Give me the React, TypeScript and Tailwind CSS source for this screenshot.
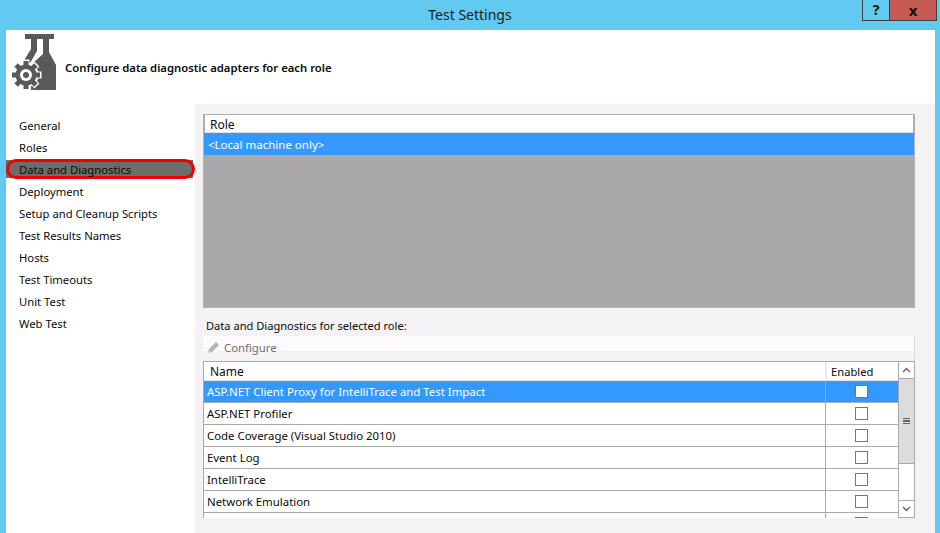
const font = { fontFamily: '"Noto Sans", sans-serif' };

const nav = ["General", "Roles", "Data and Diagnostics", "Deployment", "Setup and Cleanup Scripts", "Test Results Names", "Hosts", "Test Timeouts", "Unit Test", "Web Test"];
const rows = ["ASP.NET Client Proxy for IntelliTrace and Test Impact", "ASP.NET Profiler", "Code Coverage (Visual Studio 2010)", "Event Log", "IntelliTrace", "Network Emulation"];
const angles = [0, 45, 90, 135, 180, 225, 270, 315];

function Flask() {
  return (
    <svg width="46" height="57" viewBox="0 0 46 57" className="block shrink-0">
      <path fill="#595959" d="M14 0H43V5H38V18L45 31V56H20V40L22 29L32 20V5H26V17L18 31L12 28L20 15V5H14Z" />
      <g transform="translate(15 41)">
        <circle r="11" fill="#fff" stroke="#fff" strokeWidth="3" />
        {angles.map((a) => (
          <rect key={"h" + a} x="-3.500" y="-15.500" width="7" height="7" fill="#fff" transform={`rotate(${a})`} />
        ))}
        {angles.map((a) => (
          <rect key={a} x="-2.500" y="-14" width="5" height="6" fill="#595959" transform={`rotate(${a})`} />
        ))}
        <circle r="10.500" fill="#595959" />
        <circle r="6" fill="#fff" />
        <circle r="3" fill="#595959" />
      </g>
    </svg>
  );
}

function Check() {
  return <div className="w-[13px] h-[13px] border border-[#767676] bg-white" />;
}

export default function App() {
  return (
    <div className="w-[940px] h-[533px] overflow-hidden bg-[#62c9f0] flex flex-col text-[11.500px] leading-[16px] text-[#0a0a0a]" style={font}>
      <div className="h-[30px] shrink-0 relative flex items-center justify-center border-b border-[#8fb6c6]">
        <span className="text-[14px] text-[#1c1c1c]">Test Settings</span>
        <div className="absolute top-0 left-[862px] flex h-[21px] border-x border-b border-[#3d3d3d] font-bold text-[#111]">
          <div className="w-[27px] flex items-center justify-center border-r border-[#3d3d3d] text-[14px]">?</div>
          <div className="w-[46px] bg-[#c75a52] flex items-center justify-center text-[15px]">x</div>
        </div>
      </div>
      <div className="flex-1 ml-[6px] mr-[5px] bg-white flex flex-col min-h-0">
        <div className="h-[74px] shrink-0 flex items-start pl-[5px] pt-[4px]">
          <Flask />
          <div className="ml-[8px] mt-[26px] font-semibold text-[11.300px]">Configure data diagnostic adapters for each role</div>
        </div>
        <div className="flex-1 flex min-h-0">
          <div className="w-[189px] shrink-0 pt-[11px]">
            {nav.map((n, i) => (
              <div key={n} className={i === 2 ? "relative h-[22px] pl-[13px] flex items-center" : "h-[22px] pl-[13px] flex items-center"}>
                {i === 2 && <div className="absolute left-0 top-[1px] w-[187px] h-[18px] bg-[#6c6e69]" />}
                {i === 2 && <div className="absolute left-0 top-0 w-[189px] h-[20px] border-[3px] border-[#f00000] rounded-[10px]" />}
                <span className="relative text-[11.250px]">{n}</span>
              </div>
            ))}
          </div>
          <div className="flex-1 bg-[#f5f2f5] pl-[8px] pr-[20px] pt-[10px] flex flex-col min-h-0">
            <div className="h-[194px] shrink-0 bg-[#aaa8aa] border border-[#b4afb4] flex flex-col">
              <div className="h-[18px] mx-[1px] bg-white pl-[5px] pt-[2px] flex items-center border-b border-[#e0e0e0] text-[12px]">Role</div>
              <div className="h-[22px] bg-[#3399ff] text-white pl-[4px] pt-[1px] flex items-center">&lt;Local machine only&gt;</div>
            </div>
            <div className="h-[28px] shrink-0 pl-[3px] pt-[8px] flex items-center text-[11.100px]">Data and Diagnostics for selected role:</div>
            <div className="h-[25px] shrink-0 bg-gradient-to-b from-[#fdfafd] from-60% to-[#f5f2f5] to-60% pl-[4px] pb-[2px] flex items-center gap-[4px] text-[#6d6d6d] border-r border-[#d8d8d8]">
              <svg width="13" height="13" viewBox="0 0 13 13"><path fill="#b5b5b5" d="M9 1l3 3-7 7-4 1 1-4zM1 12h3L1 9z" /></svg>
              <span className="text-[11.300px]">Configure</span>
            </div>
            <div className="h-[157px] shrink-0 flex border-t border-[#aaa8aa] overflow-hidden">
              <div className="flex-1 border-l border-[#aaa8aa] min-w-0">
                <div className="h-[19px] flex bg-white border-b border-[#e4e4e4]">
                  <div className="flex-1 pl-[6px] pt-[2px] flex items-center text-[12px]">Name</div>
                  <div className="w-[73px] flex items-center pl-[4px] pt-[2px] border-l-2 border-[#e8e8e8] text-[11.200px]">Enabled</div>
                </div>
                {rows.map((r, i) => (
                  <div key={r} className={i === 0 ? "h-[22px] flex bg-[#3399ff] text-white border-b border-[#aaa8aa]" : "h-[22px] flex bg-white border-b border-[#aaa8aa]"}>
                    <div className="flex-1 pl-[3px] flex items-center text-[11.400px]">{r}</div>
                    <div className="w-[73px] flex items-center justify-center pr-[2px] border-l border-[#aaa8aa]"><Check /></div>
                  </div>
                ))}
                <div className="h-[6px] bg-white flex">
                  <div className="flex-1" />
                  <div className="w-[73px] flex justify-center pr-[2px] border-l border-[#aaa8aa] pt-[4px]"><div className="w-[13px] h-[13px] border border-[#767676] shrink-0" /></div>
                </div>
              </div>
              <div className="w-[17px] shrink-0 border-l border-r border-b border-[#aaa8aa] bg-white flex flex-col">
                <div className="h-[16px] flex items-center justify-center"><svg width="9" height="6" viewBox="0 0 9 6"><path d="M1 5l3.500-3.500L8 5" fill="none" stroke="#666" strokeWidth="1.400" /></svg></div>
                <div className="h-[86px] bg-[#dcdcdc] border-y border-[#aaa8aa] flex flex-col items-center justify-center gap-[1px]">
                  <div className="w-[7px] h-[1.500px] bg-[#666]" /><div className="w-[7px] h-[1.500px] bg-[#666]" /><div className="w-[7px] h-[1.500px] bg-[#666]" />
                </div>
                <div className="flex-1" />
                <div className="h-[17px] flex items-center justify-center border-t border-[#aaa8aa]"><svg width="9" height="6" viewBox="0 0 9 6"><path d="M1 1l3.500 3.500L8 1" fill="none" stroke="#666" strokeWidth="1.400" /></svg></div>
              </div>
            </div>
          </div>
        </div>
      </div>
    </div>
  );
}
